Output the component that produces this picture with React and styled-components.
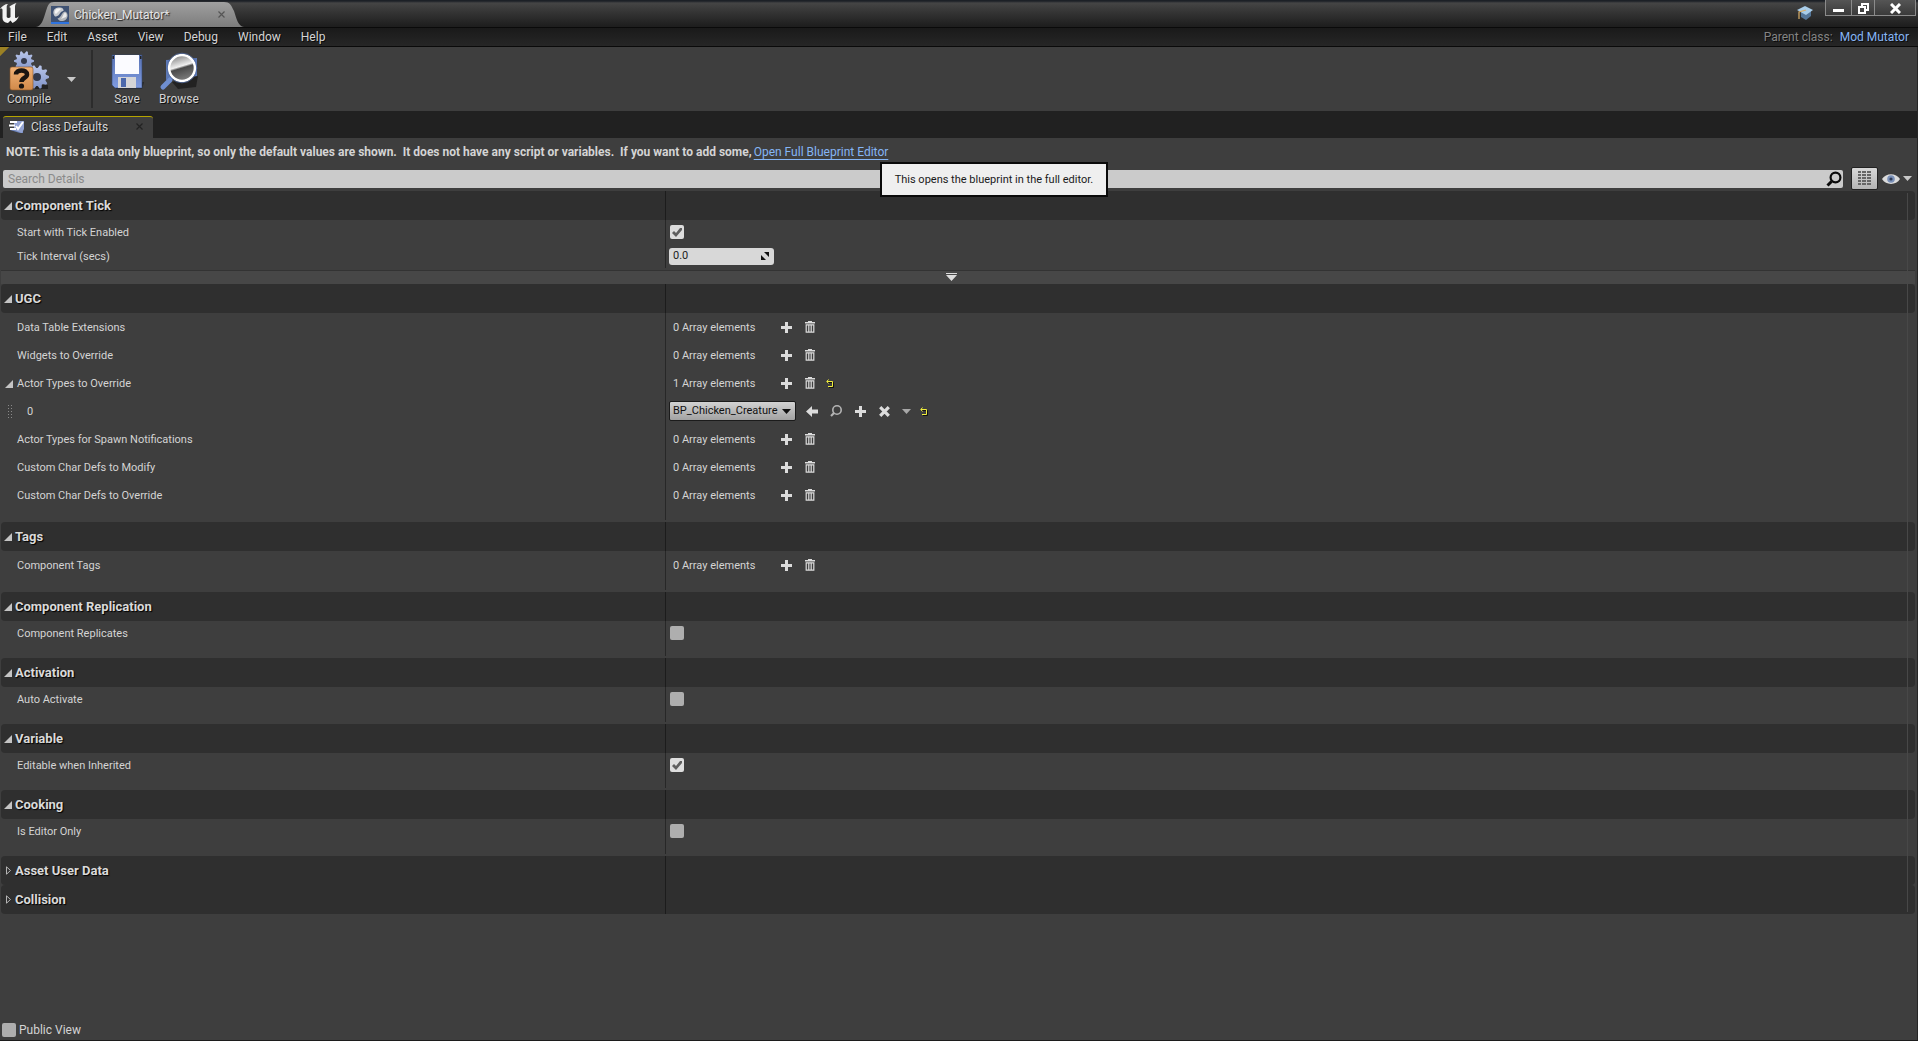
import React from "react";
import styled, { createGlobalStyle } from "styled-components";

const Global = createGlobalStyle`
  * { box-sizing: border-box; }
  body { margin: 0; background: #3e3e3e; }
  button, input, select { font: inherit; color: inherit; margin: 0; }
  button { border: 0; padding: 0; background: none; display: flex; align-items: center; justify-content: center; }
  svg { display: block; flex: none; }
`;

const Window = styled.div`
  display: flex;
  flex-direction: column;
  min-height: 100vh;
  background: #3e3e3e;
  border-bottom: 1px solid #1c1c1c;
  color: #d4d4d4;
  font: 12px/16px Roboto, "Liberation Sans", sans-serif;
`;

const TitleBar = styled.header`
  display: flex;
  align-items: flex-start;
  height: 27px;
  background: linear-gradient(#1c2026 0, #1c2026 1px, #454545 3px, #383838 10px, #1e1e1e 26px);
`;

const Logo = styled.div`
  width: 36px;
  height: 26px;
  padding-top: 3px;
`;

const AssetTab = styled.div`
  display: flex;
  align-items: center;
  width: 208px;
  height: 25px;
  margin-top: 2px;
  padding: 0 19px 0 15px;
  gap: 5px;
  background: linear-gradient(#a0a0a0, #7c7c7c);
  clip-path: path("M0 25 C6 24 7 18 10 9 C12 3 13 0 18 0 L188 0 C194 0 195 3 198 9 C201 18 202 24 208 25 Z");
  font-size: 12px;
  color: #e6e6e6;
  text-shadow: 1px 1px 1px #222;
`;

const Grow = styled.div`
  flex: 1;
`;

const TutorialButton = styled.button`
  margin: 5px 11px 0 0;
`;

const WindowButtons = styled.div`
  display: flex;
  margin-right: 2px;
  border: 1px solid #8b8b8b;
  border-top: 0;
`;

const WindowButton = styled.button`
  width: ${(p) => p.$w}px;
  height: 15px;
  padding-top: 2px;
  background: linear-gradient(#555, #3a3a3a);
  & + & { border-left: 1px solid #8b8b8b; }
`;

const MenuBar = styled.nav`
  display: flex;
  align-items: center;
  height: 20px;
  padding-right: 9px;
  background: linear-gradient(#1a1a1a, #262626);
  border-top: 1px solid #0a0a0a;
  border-bottom: 1px solid #0a0a0a;
  font-size: 12px;
  text-shadow: 1px 1px 0 #0c0c0c;
`;

const MenuItem = styled.button`
  padding: 0 10px 0;
  text-shadow: inherit;
  &:first-child { padding-left: 8px; }
`;

const Muted = styled.span`
  color: #848484;
  margin-right: 7px;
`;

const Link = styled.a`
  color: #85b5f5;
  text-decoration: ${(p) => (p.$line ? "underline" : "none")};
  text-underline-offset: 3px;
`;

const Workspace = styled.div`
  display: flex;
  flex: 1;
  flex-direction: column;
  border-right: 1px solid #262626;
`;

const Toolbar = styled.div`
  display: flex;
  height: 64px;
  background: linear-gradient(135deg, #9b8124 6px, transparent 7px), #3e3e3e;
`;

const ToolButton = styled.button`
  flex-direction: column;
  justify-content: flex-start;
  width: ${(p) => p.$w}px;
  padding-top: 2px;
  text-shadow: 1px 1px 0 #111;
`;

const ToolArrow = styled.button`
  width: 26px;
  height: 64px;
`;

const ToolSep = styled.div`
  width: 2px;
  margin: 3px 9px 3px 7px;
  background: #2c2c2c;
`;

const PanelTabs = styled.div`
  display: flex;
  align-items: flex-end;
  height: 27px;
  padding-left: 3px;
  background: #212121;
`;

const PanelTab = styled.div`
  display: flex;
  align-items: center;
  width: 150px;
  height: 22px;
  padding: 0 10px 2px 6px;
  gap: 7px;
  background: #3e3e3e;
  border-top: 1px solid #b5a300;
  border-radius: 3px 3px 0 0;
  text-shadow: 1px 1px 0 #111;
`;

const Note = styled.p`
  display: flex;
  align-items: center;
  height: 28px;
  margin: 0;
  padding-left: 6px;
  gap: 2px;
  white-space: pre;
`;

const NoteText = styled.span`
  font-weight: 700;
`;

const LinkAnchor = styled.span`
  position: relative;
`;

const Tooltip = styled.span`
  position: absolute;
  left: 126px;
  top: 18px;
  z-index: 2;
  padding: 8px 13px;
  border: 2px solid #0a0a0a;
  background: #efefef;
  color: #1a1a1a;
  font-size: 11px;
  line-height: 15px;
`;

const SearchRow = styled.div`
  display: flex;
  align-items: center;
  height: 25px;
  padding: 0 5px 0 3px;
`;

const SearchBox = styled.label`
  display: flex;
  flex: 1;
  align-items: center;
  height: 18px;
  padding: 0 1px 0 5px;
  background: #cbcbcb;
  border-radius: 2px;
`;

const SearchInput = styled.input`
  flex: 1;
  min-width: 0;
  padding: 0;
  border: 0;
  outline: 0;
  background: none;
  color: #222;
  &::placeholder { color: #8a8a8a; opacity: 1; }
`;

const MatrixButton = styled.button`
  width: 27px;
  height: 23px;
  margin: 0 4px 0 8px;
  border: 1px solid #222;
  border-radius: 2px;
  background: linear-gradient(#d8d8d8, #b4b4b4);
`;

const ViewButton = styled.button`
  gap: 3px;
`;

const Details = styled.main`
  flex: 1;
  padding: 0 2px 0 1px;
`;

const Categories = styled.div`
  position: relative;
`;

const ScrollTrack = styled.div`
  position: absolute;
  top: 2px;
  right: 7px;
  bottom: 2px;
  width: 1px;
  background: #484848;
`;

const Section = styled.section`
  padding-bottom: ${(p) => (p.$pad ? 2 : 0)}px;
`;

const SectionHead = styled.h2`
  display: grid;
  grid-template-columns: 665px 1fr;
  height: 29px;
  margin: 0;
  background: #2f2f2f;
  border-radius: 4px;
  font-size: 13px;
  font-weight: 700;
  color: #dadada;
  text-shadow: 1px 1px 1px #000;
`;

const SectionToggle = styled.button`
  justify-content: flex-start;
  gap: 3px;
  padding-left: 3px;
  border-right: 1px solid #1c1c1c;
  text-shadow: inherit;
`;

const Row = styled.div`
  display: grid;
  grid-template-columns: 665px 1fr;
  height: ${(p) => (p.$tall ? 28 : 24)}px;
  font-size: 11px;
`;

const NameCell = styled.div`
  display: flex;
  align-items: center;
  gap: ${(p) => (p.$child ? 15 : 4)}px;
  padding-top: 1px;
  padding-left: ${(p) => (p.$lead ? (p.$child ? 6 : 4) : 16)}px;
  border-right: 1px solid #272727;
`;

const Spacer = styled.div`
  width: 665px;
  height: ${(p) => p.$h}px;
  border-right: 1px solid #272727;
`;

const ValueCell = styled.div`
  display: flex;
  align-items: center;
  padding-left: ${(p) => (p.$check ? 4 : 3)}px;
`;

const ArrayCount = styled.span`
  width: 105px;
  padding: 1px 0 0 4px;
`;

const IconButton = styled.button`
  width: ${(p) => p.$w || 24}px;
  height: 20px;
`;

const Check = styled.input.attrs({ type: "checkbox" })`
  appearance: none;
  width: 14px;
  height: 14px;
  border-radius: 2px;
  background: #aeaeae;
  &:checked { background: #dedede; }
  &:checked::after {
    content: "";
    display: block;
    width: 14px;
    height: 14px;
    background: #5f5f5f;
    clip-path: polygon(2px 8px, 4px 6px, 6px 8px, 10px 3px, 12px 3px, 12px 5px, 6px 12px);
  }
`;

const NumberBox = styled.label`
  display: flex;
  align-items: center;
  width: 105px;
  height: 17px;
  padding: 0 5px 0 4px;
  border-radius: 3px;
  background: #d8d8d8;
  color: #222;
`;

const NumberInput = styled.input`
  flex: 1;
  min-width: 0;
  padding: 0;
  border: 0;
  background: none;
`;

const SelectWrap = styled.div`
  display: grid;
  align-items: center;
  width: 127px;
  margin-right: 10px;
  svg { grid-area: 1 / 1; justify-self: end; margin-right: 5px; pointer-events: none; }
`;

const Select = styled.select`
  grid-area: 1 / 1;
  appearance: none;
  height: 20px;
  padding: 0 0 0 3px;
  border: 1px solid #1b1b1b;
  border-radius: 2px;
  background: linear-gradient(#d2d2d2, #a2a2a2);
  color: #111;
`;

const Advanced = styled.button`
  width: 100%;
  height: 14px;
  margin-top: 2px;
  padding: 0 14px 2px 0;
  border-top: 1px solid #333;
  background: #474747;
`;

const Footer = styled.footer`
  display: flex;
  align-items: center;
  height: 20px;
  padding-left: 2px;
`;

const FooterLabel = styled.label`
  display: flex;
  align-items: center;
  gap: 3px;
`;

const Icon = ({ w = 12, h = w, box = `0 0 ${w} ${h}`, children }) => (
  <svg width={w} height={h} viewBox={box} fill="none" aria-hidden="true">{children}</svg>
);

const UnrealLogo = () => (
  <Icon w={20} h={21}>
    <path fill="#f2f2f2" d="M0 6C2 3 5 1 8 1C7 2 6.700 3 6.700 4V14C7.500 15.500 9.500 15.300 10.500 14V5.500C10.500 4.500 10 4 9 4.200C11 2 13.500 1 16.500 0C15.300 1.500 15 2.500 15 4V14C15 15.500 16.500 15.500 19 13C17.800 16.500 15.500 18.500 12.500 20L10.500 17.500L8 20C4.500 19.500 2.500 18 2.500 15V7C2.500 5.500 1.500 5 0 6Z" />
  </Icon>
);
const AssetIcon = () => (
  <Icon w={18}>
    <path fill="#3f5273" d="M0 0h18v18H0z" />
    <path fill="#2f74e0" d="M0 16h18v2H0z" />
    <path fill="#c9ccd0" d="M3 9C1 5 4 1 8 1.500C11 1 13 3 12.500 5C9 5 9 10 5 10.500C4 10.500 3.500 10 3 9Z" />
    <path fill="#f4f4f4" d="M4 5C5 2.500 8 2 10 3L5 8C4 7.500 3.500 6.500 4 5Z" />
    <path fill="#b3b6ba" d="M14 5.500C17 6.500 17.500 11 15 13.500C12 16 8 15.500 6.500 12.500C10.500 12 10 6.500 14 5.500Z" />
    <path fill="#ececec" d="M14 6.500C16 8 16 10 15 11L10 13C12 11 12 8 14 6.500Z" />
  </Icon>
);
const Cross = ({ c }) => <Icon w={7}><path stroke={c} strokeWidth="1.200" d="M.5 .5L6.500 6.500M6.500 .5L.5 6.500" /></Icon>;
const Cap = () => (
  <Icon w={17} h={17}>
    <path fill="#55779a" d="M4 7V12L9 15L14 11V6Z" />
    <path fill="#a9cdea" d="M0 5L8 1L16 5L9 10Z" />
    <path stroke="#d9ae68" strokeWidth="1.200" d="M9 5L2 7V14" />
  </Icon>
);
const gearPath = (cx, cy, r, n) => {
  let d = "";
  for (let i = 0; i < n * 4; i++) {
    const a = ((i - 0.5) / (n * 4)) * Math.PI * 2;
    const rr = i % 4 < 2 ? r : r * 0.76;
    d += `${i ? "L" : "M"}${(cx + Math.cos(a) * rr).toFixed(2)} ${(cy + Math.sin(a) * rr).toFixed(2)}`;
  }
  return d + "Z";
};
const CompileIcon = () => (
  <Icon w={42} h={42}>
    <defs>
      <linearGradient id="gear" x1="0" y1="0" x2="0" y2="1"><stop stopColor="#b9c6ea" /><stop offset="1" stopColor="#8093c8" /></linearGradient>
      <linearGradient id="box" x1="0" y1="0" x2="0" y2="1"><stop stopColor="#f2b276" /><stop offset="1" stopColor="#d18a4a" /></linearGradient>
    </defs>
    <path fill="#222" d="M24 36H40V40H24Z" />
    <path fill="url(#gear)" d={gearPath(16, 12, 10, 10)} />
    <circle cx="16" cy="12" r="3" fill="#343a4c" />
    <path fill="url(#gear)" d={gearPath(29, 28, 12, 10)} />
    <circle cx="29" cy="28" r="4" fill="#343a4c" />
    <rect x="2" y="18" width="23" height="23" rx="2" fill="url(#box)" stroke="#8b5526" strokeWidth=".6" />
    <path stroke="#1a1410" strokeWidth="4.500" d="M8 25.500C8 20 19 20 19 25.500C19 29 13.500 29 13.500 33" />
    <circle cx="13.500" cy="37" r="2.600" fill="#1a1410" />
  </Icon>
);
const SaveIcon = () => (
  <Icon w={34} h={42}>
    <defs><linearGradient id="disk" x1="0" y1="0" x2="0" y2="1"><stop stopColor="#5872b4" /><stop offset="1" stopColor="#7f9be0" /></linearGradient></defs>
    <path fill="#1b1b1b" opacity=".7" d="M6 37L34 33L32 40H6Z" />
    <path fill="url(#disk)" stroke="#34466e" strokeWidth=".6" d="M2 6H32V39H5L2 36Z" />
    <path fill="#fbfbff" d="M5 6H29V25H5Z" />
    <path fill="#d5d5d8" d="M8 28H26V39H8Z" />
    <path fill="#4c68ac" d="M11 29H16V38H11Z" />
    <path fill="#222" d="M2.500 7H4V10H2.500ZM30 7H31.500V10H30Z" />
  </Icon>
);
const BrowseIcon = () => (
  <Icon w={42} h={42}>
    <defs><linearGradient id="lens" x1="0" y1="0" x2="0.300" y2="1"><stop stopColor="#6c6c6c" /><stop offset=".52" stopColor="#f0f0f0" /><stop offset=".6" stopColor="#4a4a4a" /><stop offset="1" stopColor="#777" /></linearGradient></defs>
    <path fill="#1a1a1a" opacity=".75" d="M14 33L40 27L38 38L20 40Z" />
    <path fill="#5c78b5" d="M8 11L39 9V27L8 31Z" />
    <path stroke="#6f8fd0" strokeWidth="5" strokeLinecap="round" d="M12 31L5 38" />
    <circle cx="24" cy="19" r="13" fill="url(#lens)" stroke="#fff" strokeWidth="2.600" />
    <circle cx="24" cy="19" r="14.800" stroke="#4f689e" strokeWidth=".8" />
  </Icon>
);
const Caret = ({ c = "#c8c8c8", w = 9 }) => <Icon w={w} h={5} box="0 0 9 5"><path fill={c} d="M0 0h9L4.500 5z" /></Icon>;
const DetailsIcon = () => (
  <Icon w={15} h={14}>
    <path fill="#6f86bd" d="M1 10L14 9V13H11Z" />
    <path fill="#93a3d2" d="M5 1H15V9L13 13L5 10Z" />
    <path stroke="#fff" strokeWidth="2" d="M1 2H8M0 5.500H6M1 9H7M7 6L9 9L14 2" />
  </Icon>
);
const SearchIcon = () => <Icon w={16}><circle cx="9.500" cy="6.500" r="4.900" stroke="#0a0a0a" strokeWidth="2.200" /><path stroke="#0a0a0a" strokeWidth="3" d="M5.500 10.500L1.500 14.500" /></Icon>;
const Matrix = () => (
  <Icon w={13} h={15}>
    {[0, 3, 6, 9, 12].map((y) => <path key={y} fill="#666" d={`M0 ${y}h3v2h-3zM4 ${y}h4v2h-4zM9 ${y}h4v2h-4z`} />)}
  </Icon>
);
const Eye = () => (
  <Icon w={18} h={12}>
    <path fill="#dcdcdc" d="M0 6C4 -.5 14 -.5 18 6C14 12.500 4 12.500 0 6Z" />
    <circle cx="9" cy="6" r="3.800" fill="#7a90b8" /><circle cx="9" cy="6" r="1.600" fill="#2f3d5a" />
  </Icon>
);
const Open = () => <Icon w={8}><path fill="#c4c4c4" d="M8 0V8H0Z" /></Icon>;
const Closed = () => <Icon w={8} h={9}><path stroke="#b5b5b5" d="M2.500 .8V8.200L6.500 4.500Z" /></Icon>;
const Plus = () => <Icon w={11}><path fill="#dcdcdc" d="M4 0h3v4h4v3H7v4H4V7H0V4h4z" /></Icon>;
const Trash = () => (
  <Icon w={10} h={12}>
    <path fill="#dcdcdc" d="M3 1V0h4v1h3v1.600H0V1z" />
    <path stroke="#dcdcdc" strokeWidth="1.200" d="M1.200 3.800H8.800V11.200H1.200Z" />
    <path stroke="#dcdcdc" strokeWidth="1.200" d="M3.800 4V11M6.200 4V11" />
  </Icon>
);
const Reset = () => (
  <Icon w={9} h={9}>
    <path stroke="#111" d="M2 3.500H7.500V8.500H3" />
    <path stroke="#f0ee3c" d="M1 2.500H6.500V7.500H2M2.500 .5L.8 2.500L2.500 4.500" />
  </Icon>
);
const Back = () => <Icon w={12} h={11}><path fill="#dcdcdc" d="M0 5.500L6 0V3.500H12V7.500H6V11Z" /></Icon>;
const Find = () => <Icon w={12}><circle cx="7" cy="5" r="4.200" stroke="#b4b4b4" strokeWidth="1.600" /><path stroke="#b4b4b4" strokeWidth="2.200" d="M4 8L1 11" /></Icon>;
const Remove = () => <Icon w={11}><path stroke="#dcdcdc" strokeWidth="3.200" d="M1.200 1.200L9.800 9.800M9.800 1.200L1.200 9.800" /></Icon>;
const Spin = () => <Icon w={8}><path fill="#111" d="M3 0H8V5ZM0 3V8H5Z" /></Icon>;
const Drag = () => (
  <Icon w={5} h={14}>
    {[0, 3, 6, 9, 12].map((y) => <path key={y} fill="#8a8a8a" d={`M1 ${y}h1v1h-1zM4 ${y}h1v1h-1z`} />)}
  </Icon>
);

const Category = ({ title, pad = true, closed, children }) => (
  <Section $pad={pad && !closed}>
    <SectionHead>
      <SectionToggle aria-expanded={!closed}>{closed ? <Closed /> : <Open />}{title}</SectionToggle>
    </SectionHead>
    {children}
    {pad && !closed && <Spacer $h={11} />}
  </Section>
);

const CheckRow = ({ id, label, on }) => (
  <Row>
    <NameCell><label htmlFor={id}>{label}</label></NameCell>
    <ValueCell $check><Check id={id} defaultChecked={on} /></ValueCell>
  </Row>
);

const ArrayRow = ({ label, count = 0, open }) => (
  <Row $tall>
    <NameCell $lead={open}>{open && <Open />}{label}</NameCell>
    <ValueCell>
      <ArrayCount>{count} Array elements</ArrayCount>
      <IconButton aria-label="Add element"><Plus /></IconButton>
      <IconButton aria-label="Empty array"><Trash /></IconButton>
      {open && <IconButton $w={16} aria-label="Reset to default"><Reset /></IconButton>}
    </ValueCell>
  </Row>
);

const MENUS = ["File", "Edit", "Asset", "View", "Debug", "Window", "Help"];

export default function App() {
  return (
    <Window>
      <Global />
      <TitleBar>
        <Logo><UnrealLogo /></Logo>
        <AssetTab>
          <AssetIcon />
          <span>Chicken_Mutator*</span>
          <Grow />
          <button aria-label="Close tab"><Cross c="#555" /></button>
        </AssetTab>
        <Grow />
        <TutorialButton aria-label="Tutorials"><Cap /></TutorialButton>
        <WindowButtons>
          <WindowButton $w={25} aria-label="Minimize"><Icon w={11} h={9}><path fill="#fff" d="M0 5h11v3H0z" /></Icon></WindowButton>
          <WindowButton $w={23} aria-label="Restore"><Icon w={11}><path stroke="#fff" strokeWidth="2" d="M4 3V1H10V7H8M1 4H7V10H1Z" /></Icon></WindowButton>
          <WindowButton $w={41} aria-label="Close"><Icon w={11} h={11}><path stroke="#fff" strokeWidth="3" d="M1 1L10 10M10 1L1 10" /></Icon></WindowButton>
        </WindowButtons>
      </TitleBar>
      <MenuBar>
        {MENUS.map((m) => <MenuItem key={m}>{m}</MenuItem>)}
        <Grow />
        <Muted>Parent class:</Muted>
        <Link href="#parent">Mod Mutator</Link>
      </MenuBar>
      <Workspace>
        <Toolbar>
          <ToolButton $w={58}><CompileIcon />Compile</ToolButton>
          <ToolArrow aria-label="Compile options"><Caret /></ToolArrow>
          <ToolSep />
          <ToolButton $w={50}><SaveIcon />Save</ToolButton>
          <ToolButton $w={54}><BrowseIcon />Browse</ToolButton>
        </Toolbar>
        <PanelTabs>
          <PanelTab>
            <DetailsIcon />
            <span>Class Defaults</span>
            <Grow />
            <button aria-label="Close panel"><Cross c="#222" /></button>
          </PanelTab>
        </PanelTabs>
        <Note>
          <NoteText>{"NOTE: This is a data only blueprint, so only the default values are shown.  It does not have any script or variables.  If you want to add some,"}</NoteText>
          <LinkAnchor>
            <Link href="#editor" $line>Open Full Blueprint Editor</Link>
            <Tooltip role="tooltip">This opens the blueprint in the full editor.</Tooltip>
          </LinkAnchor>
        </Note>
        <SearchRow>
          <SearchBox>
            <SearchInput placeholder="Search Details" aria-label="Search Details" />
            <SearchIcon />
          </SearchBox>
          <MatrixButton aria-label="Property matrix"><Matrix /></MatrixButton>
          <ViewButton aria-label="View options"><Eye /><Caret /></ViewButton>
        </SearchRow>
        <Details>
          <Categories>
            <Category title="Component Tick" pad={false}>
              <CheckRow id="tick" label="Start with Tick Enabled" on />
              <Row>
                <NameCell><label htmlFor="interval">Tick Interval (secs)</label></NameCell>
                <ValueCell><NumberBox><NumberInput id="interval" defaultValue="0.0" /><Spin /></NumberBox></ValueCell>
              </Row>
              <Advanced aria-label="Show advanced">
                <Icon w={11} h={8}><path fill="#dcdcdc" d="M0 0h11v1H0zM0 2h11L5.500 8z" /></Icon>
              </Advanced>
            </Category>
            <Category title="UGC">
              <ArrayRow label="Data Table Extensions" />
              <ArrayRow label="Widgets to Override" />
              <ArrayRow label="Actor Types to Override" count={1} open />
              <Row $tall>
                <NameCell $lead $child><Drag /><label htmlFor="actor">0</label></NameCell>
                <ValueCell>
                  <SelectWrap>
                    <Select id="actor"><option>BP_Chicken_Creature</option></Select>
                    <Caret c="#111" />
                  </SelectWrap>
                  <IconButton $w={12} aria-label="Use selected asset"><Back /></IconButton>
                  <IconButton $w={36} aria-label="Browse to asset"><Find /></IconButton>
                  <IconButton $w={12} aria-label="New asset"><Plus /></IconButton>
                  <IconButton $w={36} aria-label="Clear"><Remove /></IconButton>
                  <IconButton $w={9} aria-label="Element options"><Caret c="#a8a8a8" /></IconButton>
                  <IconButton $w={26} aria-label="Reset to default"><Reset /></IconButton>
                </ValueCell>
              </Row>
              <ArrayRow label="Actor Types for Spawn Notifications" />
              <ArrayRow label="Custom Char Defs to Modify" />
              <ArrayRow label="Custom Char Defs to Override" />
            </Category>
            <Category title="Tags"><ArrayRow label="Component Tags" /></Category>
            <Category title="Component Replication"><CheckRow id="replicates" label="Component Replicates" /></Category>
            <Category title="Activation"><CheckRow id="activate" label="Auto Activate" /></Category>
            <Category title="Variable"><CheckRow id="editable" label="Editable when Inherited" on /></Category>
            <Category title="Cooking"><CheckRow id="editoronly" label="Is Editor Only" /></Category>
            <Category title="Asset User Data" closed />
            <Category title="Collision" closed />
            <ScrollTrack />
          </Categories>
        </Details>
        <Footer>
          <FooterLabel><Check />Public View</FooterLabel>
        </Footer>
      </Workspace>
    </Window>
  );
}
